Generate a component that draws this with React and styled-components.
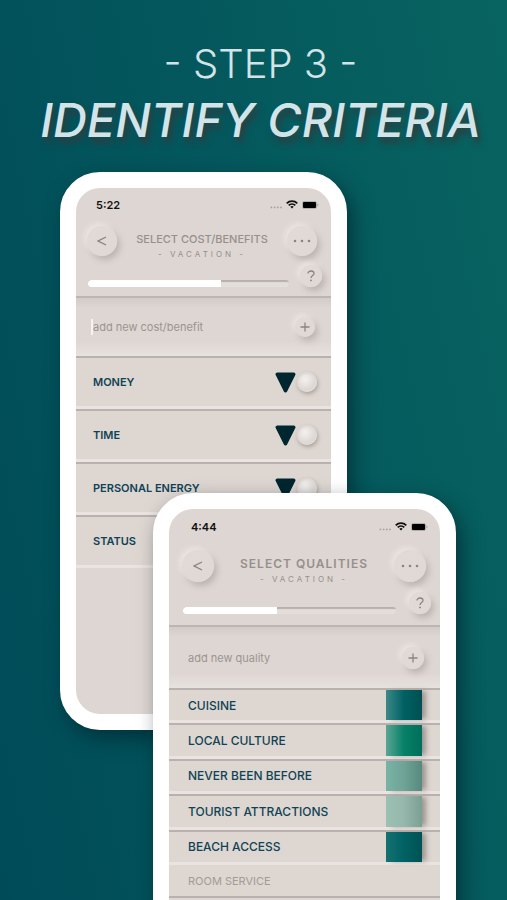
import React from 'react';
import styled, { createGlobalStyle, css } from 'styled-components';

const GlobalStyle = createGlobalStyle`
  * {
    box-sizing: border-box;
  }
  body {
    margin: 0;
    font-family: Inter, 'Liberation Sans', sans-serif;
  }
  button, input {
    font-family: inherit;
  }
`;

const Page = styled.main`
  display: flex;
  flex-direction: column;
  height: 100vh;
  overflow: hidden;
  background: linear-gradient(78deg, #004b58 0%, #04585d 55%, #086460 100%);
`;

const Heading = styled.header`
  flex-shrink: 0;
  height: 172px;
  padding: 38px 0 0 14px;
  text-align: center;
  color: #d3e4e8;
`;

const Step = styled.p`
  margin: 0;
  font-size: 40px;
  line-height: 52px;
  font-weight: 300;
`;

const Title = styled.h1`
  margin: 0;
  font-size: 47px;
  line-height: 60px;
  font-weight: 500;
  font-style: italic;
  white-space: nowrap;
  text-shadow: 3px 6px 6px #2c3e42;
`;

const Stage = styled.div`
  flex: 1;
  display: grid;
  grid-template-columns: 60fr 93fr 194fr 109fr 51fr;
  grid-template-rows: 321px 1fr;
`;

const Phone = styled.section`
  grid-column: ${(p) => (p.$large ? '3 / 5' : '2 / 4')};
  grid-row: ${(p) => (p.$large ? '2 / 3' : '1 / 3')};
  align-self: start;
  min-width: 0;
  min-height: ${(p) => (p.$large ? 590 : 558)}px;
  border: 16px solid #fff;
  border-radius: 40px;
  overflow: hidden;
  color: #96908d;
  background: #ded6d2;
  box-shadow: 6px 8px 20px rgba(0, 25, 35, 0.55);
`;

const StatusBar = styled.div`
  display: flex;
  align-items: center;
  gap: 4px;
  height: ${(p) => (p.$large ? 35 : 33)}px;
  padding: 0 12px 0 ${(p) => (p.$large ? 22 : 20)}px;
  color: #111;

  time {
    margin-right: auto;
    font-size: 11px;
    font-weight: 600;
  }
`;

const Top = styled.div`
  display: grid;
  grid-template-columns: auto 1fr auto;
  align-items: center;
  height: ${(p) => (p.$large ? 43 : 39)}px;
  padding: 0 14px 0 ${(p) => (p.$large ? 13 : 11)}px;
`;

const Names = styled.div`
  padding-top: 10px;
  text-align: center;
  white-space: nowrap;

  h2 {
    margin: 0;
    font-size: ${(p) => (p.$large ? 12 : 11)}px;
    line-height: 16px;
    font-weight: ${(p) => (p.$large ? 600 : 500)};
    letter-spacing: ${(p) => (p.$large ? 1 : 0)}px;
  }
  p {
    margin: 0;
    font-size: 8px;
    line-height: 14px;
    letter-spacing: 3px;
  }
`;

const RoundButton = styled.button`
  flex-shrink: 0;
  display: grid;
  place-items: center;
  width: ${(p) => p.$size}px;
  height: ${(p) => p.$size}px;
  padding: 0;
  border: 0;
  border-radius: 50%;
  color: #8a8582;
  background: linear-gradient(135deg, #e1dad7, #dfd8d4);
  box-shadow: -3px -3px 5px #e9e4e1, 3px 4px 6px #bcb4b0;
`;

const ProgressRow = styled.div`
  display: flex;
  align-items: flex-start;
  justify-content: space-between;
  height: ${(p) => (p.$large ? 40 : 38)}px;
  padding: 5px 9px 0 ${(p) => (p.$large ? 14 : 12)}px;
  border-bottom: 2px solid #bdb5b2;
`;

const Progress = styled.progress`
  appearance: none;
  width: 86%;
  height: 7px;
  margin-top: 15px;
  border: 0;
  border-radius: 3px;
  overflow: hidden;
  background: #e4dedb;

  &::-webkit-progress-bar {
    background: #e4dedb;
    box-shadow: inset 0 2px 1px #b8b0ad;
  }
  &::-webkit-progress-value {
    border-radius: 3px 0 0 3px;
    background: #fff;
  }
`;

const AddForm = styled.form`
  display: flex;
  align-items: center;
  height: ${(p) => (p.$large ? 61 : 58)}px;
  padding: 0 ${(p) => (p.$large ? '16px 0 19px' : '16px 0 15px')};
  background: linear-gradient(#d3cbc7 0, #ded6d2 10px, #ded6d2 75%, #e7e2df);
`;

const AddInput = styled.input`
  flex: 1;
  min-width: 0;
  height: 16px;
  padding: 0;
  border: 0;
  border-left: ${(p) => (p.$caret ? '2px solid #f6f4f2' : '0')};
  outline: 0;
  font-size: 11px;
  background: transparent;

  &::placeholder {
    color: #9b9491;
    opacity: 1;
  }
`;

const List = styled.ul`
  display: grid;
  grid-auto-rows: 1fr;
  height: ${(p) => p.$height}px;
  margin: 0;
  padding: 0;
  list-style: none;
`;

const Row = styled.li`
  display: flex;
  align-items: center;
  justify-content: space-between;
  padding: 0 ${(p) => (p.$large ? '18px 0 19px' : '14px 0 17px')};
  border-top: 2px solid #b9b1ae;
  border-bottom: 3px solid #e9e4e1;
  font-size: ${(p) => (p.$large ? 12 : 11)}px;
  font-weight: ${(p) => (p.$large ? 500 : 600)};
  color: #0f4355;
  background: #ded6d1;

  ${(p) => p.$muted && css`
    height: 31px;
    border-top: 0;
    border-bottom: 0;
    font-size: 11px;
    font-weight: 400;
    color: #a29b98;
  `}
`;

const Rating = styled.div`
  display: flex;
  align-items: center;
  gap: 1px;
`;

const Knob = styled.button`
  width: 20px;
  height: 20px;
  padding: 0;
  border: 2px solid #e0dad7;
  border-radius: 50%;
  background: radial-gradient(circle at 38% 35%, #f3f1ef, #dcd6d2 75%);
  box-shadow: 1px 2px 4px #a59d99;
`;

const Swatch = styled.span`
  align-self: stretch;
  width: 36px;
  background: linear-gradient(90deg, ${(p) => p.$colors});
  box-shadow: 5px 0 5px -1px #9d9692;
`;

const LastRow = styled.div`
  border-top: 2px solid #b9b1ae;
  height: 40px;
`;

const Wifi = () => (
  <svg width="12" height="9" viewBox="0 0 12 9" fill="none" stroke="#111" strokeWidth="1.8" aria-hidden="true">
    <path d="M.7 3.3a7.5 7.5 0 0 1 10.6 0M2.7 5.4a4.7 4.7 0 0 1 6.6 0" />
    <path d="M4.3 6.8a2.5 2.5 0 0 1 3.4 0L6 8.6z" fill="#111" stroke="none" />
  </svg>
);

const Battery = () => (
  <svg width="17" height="8" viewBox="0 0 17 8" aria-hidden="true">
    <rect x=".4" y=".4" width="14.2" height="7.2" rx="2" fill="none" stroke="#888" strokeWidth=".6" />
    <rect x="1" y="1" width="13" height="6" rx="1" fill="#000" />
    <path d="M15.5 2.6c1.2.5 1.2 2.3 0 2.8z" fill="#999" />
  </svg>
);

const Signal = () => (
  <svg width="12" height="9" viewBox="0 0 12 9" fill="#a8a19e" aria-hidden="true">
    <circle cx="1.4" cy="7.4" r=".9" />
    <circle cx="4.6" cy="7.4" r=".9" />
    <circle cx="7.8" cy="7.4" r=".9" />
    <circle cx="11" cy="7.4" r=".9" />
  </svg>
);

const BackIcon = () => (
  <svg width="10" height="10" viewBox="0 0 10 10" fill="none" stroke="currentColor" strokeWidth="1.4">
    <path d="M9 1 1.2 5 9 9" />
  </svg>
);

const DotsIcon = () => (
  <svg width="18" height="4" viewBox="0 0 18 4" fill="currentColor">
    <circle cx="2" cy="2" r="1.3" />
    <circle cx="9" cy="2" r="1.3" />
    <circle cx="16" cy="2" r="1.3" />
  </svg>
);

const HelpIcon = () => (
  <svg width="8" height="12" viewBox="0 0 8 12" fill="none" stroke="currentColor" strokeWidth="1.3">
    <path d="M1 3.6C1 2 2.3 1 4 1s3 1 3 2.5C7 5.5 4 5.5 4 8" />
    <circle cx="4" cy="10.4" r=".9" fill="currentColor" stroke="none" />
  </svg>
);

const PlusIcon = () => (
  <svg width="10" height="10" viewBox="0 0 10 10" fill="none" stroke="currentColor" strokeWidth="1.3">
    <path d="M5 .5v9M.5 5h9" />
  </svg>
);

const Triangle = () => (
  <svg width="21" height="21" viewBox="0 0 21 21" fill="#00262f" stroke="#00262f" strokeWidth="3.6" strokeLinejoin="round" aria-hidden="true">
    <path d="M2.3 2.3h16.4L10.5 18.6z" />
  </svg>
);

const costs = ['MONEY', 'TIME', 'PERSONAL ENERGY', 'STATUS'];

const qualities = [
  { name: 'CUISINE', colors: '#3d8987, #006064 50%, #004f50' },
  { name: 'LOCAL CULTURE', colors: '#5aa593, #078068 50%, #006e5a' },
  { name: 'NEVER BEEN BEFORE', colors: '#79b3a5, #6fa396 50%, #578a7d' },
  { name: 'TOURIST ATTRACTIONS', colors: '#9bc0b4, #96b8ac 50%, #7c9f93' },
  { name: 'BEACH ACCESS', colors: '#14716f, #006265 50%, #005254' },
];

const PhoneHeader = ({ time, title, progress, large }) => (
  <>
    <StatusBar $large={large}>
      <time>{time}</time>
      <Signal />
      <Wifi />
      <Battery />
    </StatusBar>
    <Top $large={large}>
      <RoundButton type="button" aria-label="Back" $size={large ? 32 : 30}>
        <BackIcon />
      </RoundButton>
      <Names $large={large}>
        <h2>{title}</h2>
        <p>- VACATION -</p>
      </Names>
      <RoundButton type="button" aria-label="More" $size={large ? 32 : 30}>
        <DotsIcon />
      </RoundButton>
    </Top>
    <ProgressRow $large={large}>
      <Progress value={progress} max="100" aria-label="Progress" />
      <RoundButton type="button" aria-label="Help" $size={22}>
        <HelpIcon />
      </RoundButton>
    </ProgressRow>
  </>
);

const App = () => (
  <>
    <GlobalStyle />
    <Page>
      <Heading>
        <Step>- STEP 3 -</Step>
        <Title>IDENTIFY CRITERIA</Title>
      </Heading>
      <Stage>
        <Phone>
          <PhoneHeader time="5:22" title="SELECT COST/BENEFITS" progress={66} />
          <AddForm>
            <AddInput $caret placeholder="add new cost/benefit" aria-label="add new cost/benefit" />
            <RoundButton type="button" aria-label="Add" $size={20}>
              <PlusIcon />
            </RoundButton>
          </AddForm>
          <List $height={212}>
            {costs.map((name) => (
              <Row key={name}>
                {name}
                <Rating>
                  <Triangle />
                  <Knob type="button" aria-label={name} />
                </Rating>
              </Row>
            ))}
          </List>
        </Phone>
        <Phone $large>
          <PhoneHeader time="4:44" title="SELECT QUALITIES" progress={44} large />
          <AddForm $large>
            <AddInput placeholder="add new quality" aria-label="add new quality" />
            <RoundButton type="button" aria-label="Add" $size={22}>
              <PlusIcon />
            </RoundButton>
          </AddForm>
          <List $height={177}>
            {qualities.map(({ name, colors }) => (
              <Row key={name} $large>
                {name}
                <Swatch $colors={colors} />
              </Row>
            ))}
          </List>
          <Row as="div" $large $muted>ROOM SERVICE</Row>
          <LastRow />
        </Phone>
      </Stage>
    </Page>
  </>
);

export default App;
